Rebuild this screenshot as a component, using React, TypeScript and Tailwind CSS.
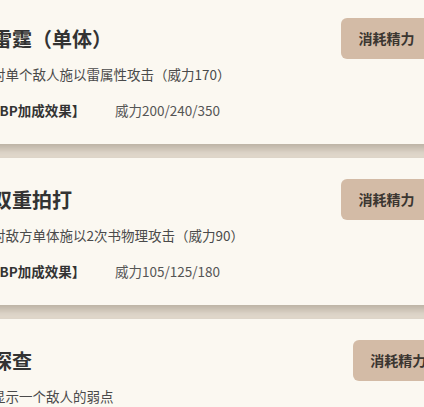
import React from 'react';

type Skill = {
    name: string;
    desc: string;
    bp: string;
    sp: string;
};

const skills: Skill[] = [
    { name: '雷霆（单体）', desc: '对单个敌人施以雷属性攻击（威力170）', bp: '威力200/240/350', sp: '16' },
    { name: '双重拍打', desc: '对敌方单体施以2次书物理攻击（威力90）', bp: '威力105/125/180', sp: '12' },
    { name: '探查', desc: '显示一个敌人的弱点', bp: '追加显示弱点数量', sp: '8' },
];

const SkillCard = ({ skill }: { skill: Skill }) => (
    <div className="bg-[#fbf8f1] px-5 pt-[21px] pb-[24px] shadow-[0_5px_9px_rgba(70,55,35,0.28)]">
        <div className="flex items-center justify-between">
            <h2 className="text-[20px] font-bold text-[#333333] leading-7">{skill.name}</h2>
            <div className="h-[41px] flex items-center px-[17px] rounded-md bg-[#d3bba6] text-[14px] font-bold text-[#3b3631] whitespace-nowrap">
                消耗精力
                <span className="ml-3 text-[20px] leading-none">{skill.sp}</span>
            </div>
        </div>
        <p className="mt-[5px] text-[13.5px] leading-5 text-[#4a4a4a]">{skill.desc}</p>
        <div className="mt-4 flex text-[13.5px] leading-5">
            <span className="w-[129px] -ml-[6px] font-bold text-[#333333]">【BP加成效果】</span>
            <span className="text-[#555555]">{skill.bp}</span>
        </div>
    </div>
);

export default function App() {
    return (
        <div
            className="h-[407px] overflow-hidden bg-[#e5ddd1]"
            style={{ fontFamily: '"Noto Sans CJK SC", "Liberation Sans", sans-serif' }}
        >
            <div className="-ml-[28px] -mt-[3px] w-[515px] flex flex-col gap-[14px]">
                {skills.map(s => <SkillCard key={s.name} skill={s} />)}
            </div>
        </div>
    );
}
